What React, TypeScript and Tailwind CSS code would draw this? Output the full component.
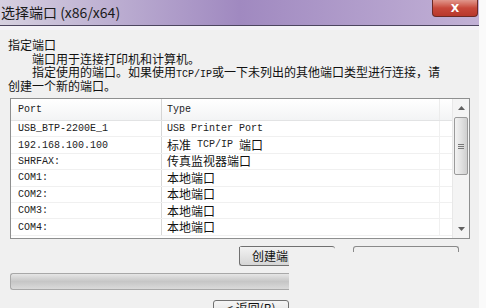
import React from "react";

const mono = "font-['Liberation_Mono','Noto_Sans_CJK_SC',monospace]";
const cjk = "font-['Noto_Sans_CJK_SC',sans-serif]";

type Seg = { t: string; zh?: boolean };

const rows: { port: string; type: Seg[] }[] = [
  { port: "USB_BTP-2200E_1", type: [{ t: "USB Printer Port" }] },
  {
    port: "192.168.100.100",
    type: [{ t: "标准", zh: true }, { t: " TCP/IP " }, { t: "端口", zh: true }],
  },
  { port: "SHRFAX:", type: [{ t: "传真监视器端口", zh: true }] },
  { port: "COM1:", type: [{ t: "本地端口", zh: true }] },
  { port: "COM2:", type: [{ t: "本地端口", zh: true }] },
  { port: "COM3:", type: [{ t: "本地端口", zh: true }] },
  { port: "COM4:", type: [{ t: "本地端口", zh: true }] },
];

function Cell({ segs }: { segs: Seg[] }) {
  return (
    <span className="flex items-center whitespace-pre">
      {segs.map((s, i) =>
        s.zh ? (
          <span key={i} className={`${cjk} text-[12px] leading-[14px] text-[#111]`}>
            {s.t}
          </span>
        ) : (
          <span key={i} className={`${mono} text-[10px] leading-[14px] text-[#222]`}>
            {s.t}
          </span>
        ),
      )}
    </span>
  );
}

function ScrollBar() {
  return (
    <div className="w-[17px] flex flex-col bg-[#f4f4f4] border-l border-[#e8e8e8]">
      <div className="h-[18px] flex items-center justify-center">
        <svg width="7" height="4" viewBox="0 0 7 4">
          <path d="M0 4 L3.5 0 L7 4 Z" fill="#606060" />
        </svg>
      </div>
      <div className="mx-[1px] h-[58px] rounded-[2px] border border-[#9a9a9a] bg-gradient-to-r from-[#f2f2f2] via-[#e2e2e2] to-[#cfcfcf] flex items-center justify-center">
        <div className="flex flex-col gap-[1px]">
          <div className="w-[6px] h-[1px] bg-[#777]" />
          <div className="w-[6px] h-[1px] bg-[#777]" />
          <div className="w-[6px] h-[1px] bg-[#777]" />
        </div>
      </div>
      <div className="flex-1" />
      <div className="h-[18px] flex items-center justify-center">
        <svg width="7" height="4" viewBox="0 0 7 4">
          <path d="M0 0 L3.5 4 L7 0 Z" fill="#606060" />
        </svg>
      </div>
    </div>
  );
}

export default function App() {
  return (
    <div className="w-[486px] h-[308px] flex overflow-hidden bg-[#f9f9f9]">
      <div className="w-[479px] flex flex-col overflow-hidden bg-[#f0f0f0]">
        {/* title bar */}
        <div className="relative h-[26px] shrink-0 border-b border-[#4d4560] bg-gradient-to-r from-[#d6d0e0] via-[#a089c0] to-[#c2b1d6]">
          <div className={`${cjk} pl-[1px] pt-[1px] text-[14px] leading-[22px] text-[#1a1a1a]`}>
            选择端口 (x86/x64)
          </div>
          <div className="absolute right-[1px] top-0 w-[46px] h-[17px] rounded-b-[4px] border border-t-0 border-[#6b2a25] bg-gradient-to-b from-[#e0968c] via-[#c7483b] to-[#b8382c] flex items-center justify-center">
            <span className="font-['DejaVu_Sans',sans-serif] text-[11px] font-bold text-white leading-none">
              X
            </span>
          </div>
        </div>
        <div className="h-[4px] shrink-0 bg-[#f4f2f7]" />

        {/* description */}
        <div className={`${cjk} shrink-0 pl-[8px] pt-[8px] text-[12px] text-[#111] flex flex-col`}>
          <div className="h-[13.5px] leading-[13.5px]">指定端口</div>
          <div className="h-[13.5px] leading-[13.5px] pl-[24px]">端口用于连接打印机和计算机。</div>
          <div className="h-[13.5px] leading-[13.5px] pl-[24px] whitespace-nowrap">
            指定使用的端口。如果使用
            <span className={`${mono} text-[10px]`}>TCP/IP</span>
            或一下未列出的其他端口类型进行连接，请
          </div>
          <div className="h-[13.5px] leading-[13.5px]">创建一个新的端口。</div>
        </div>

        {/* list */}
        <div className="ml-[10px] mt-[6px] w-[460px] h-[141px] shrink-0 border border-[#8e8f8f] bg-white flex">
          <div className="flex-1 flex flex-col">
            <div className="h-[22px] shrink-0 flex border-b border-[#e2e3e4] bg-gradient-to-b from-white to-[#f3f4f5]">
              <div className={`${mono} w-[151px] pl-[7px] border-r border-[#d5d5d5] text-[10px] text-[#222] flex items-center`}>
                Port
              </div>
              <div className={`${mono} w-[278px] pl-[5px] border-r border-[#ececec] text-[10px] text-[#222] flex items-center`}>
                Type
              </div>
            </div>
            {rows.map((r) => (
              <div key={r.port} className="h-[16.4px] shrink-0 flex border-b border-[#f0f0f0]">
                <div className={`${mono} w-[151px] pl-[7px] border-r border-[#d8d8d8] text-[10px] text-[#222] flex items-center`}>
                  {r.port}
                </div>
                <div className="w-[278px] pl-[5px] border-r border-[#f0f0f0] flex items-center">
                  <Cell segs={r.type} />
                </div>
              </div>
            ))}
          </div>
          <ScrollBar />
        </div>

        {/* buttons row */}
        <div className="mt-[7px] h-[20px] shrink-0 flex">
          <div className="ml-[239px] w-[96px] h-[20px] border-t border-[#707070] rounded-t-[3px] flex">
            <div className="w-[50px] h-full border-l border-b border-[#707070] rounded-bl-[3px] bg-gradient-to-b from-[#f2f2f2] to-[#d6d6d6] flex items-center justify-end pr-[1px]">
              <span className={`${cjk} text-[12px] leading-[14px] text-[#111]`}>创建端</span>
            </div>
          </div>
          <div className="ml-[18px] w-[106px] h-[6px] border-t border-l border-r border-[#8a8a8a] rounded-t-[3px]" />
        </div>

        {/* progress */}
        <div className="mt-[7px] ml-[10px] w-[279px] h-[17px] shrink-0 rounded-l-[3px] border border-r-0 border-[#a8a8a8] bg-gradient-to-b from-[#e6e6e6] via-[#c6c6c6] to-[#dadada]" />

        {/* back button */}
        <div className="mt-[10px] ml-[213px] w-[76px] h-[20px] shrink-0 rounded-[3px] border border-[#707070] bg-gradient-to-b from-[#f5f5f5] to-[#dddddd] flex justify-center">
          <span className={`${cjk} text-[12px] leading-[14px] text-[#111]`}>&lt; 返回(B)</span>
        </div>
      </div>
      <div className="flex-1 bg-[#fafafa]" />
    </div>
  );
}
